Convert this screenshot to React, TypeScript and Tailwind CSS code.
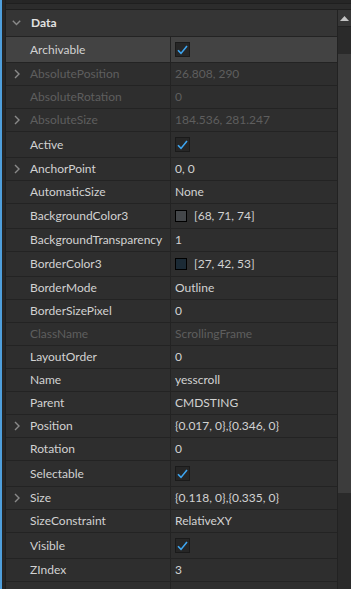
import type { ReactNode } from 'react';

type Prop = {
  name: string;
  value?: string;
  check?: boolean;
  color?: string;
  expand?: boolean;
  disabled?: boolean;
  selected?: boolean;
};

const props: Prop[] = [
  { name: 'Archivable', check: true, selected: true },
  { name: 'AbsolutePosition', value: '26.808, 290', expand: true, disabled: true },
  { name: 'AbsoluteRotation', value: '0', disabled: true },
  { name: 'AbsoluteSize', value: '184.536, 281.247', expand: true, disabled: true },
  { name: 'Active', check: true },
  { name: 'AnchorPoint', value: '0, 0', expand: true },
  { name: 'AutomaticSize', value: 'None' },
  { name: 'BackgroundColor3', value: '[68, 71, 74]', color: '#44474a' },
  { name: 'BackgroundTransparency', value: '1' },
  { name: 'BorderColor3', value: '[27, 42, 53]', color: '#1b2a35' },
  { name: 'BorderMode', value: 'Outline' },
  { name: 'BorderSizePixel', value: '0' },
  { name: 'ClassName', value: 'ScrollingFrame', disabled: true },
  { name: 'LayoutOrder', value: '0' },
  { name: 'Name', value: 'yesscroll' },
  { name: 'Parent', value: 'CMDSTING' },
  { name: 'Position', value: '{0.017, 0},{0.346, 0}', expand: true },
  { name: 'Rotation', value: '0' },
  { name: 'Selectable', check: true },
  { name: 'Size', value: '{0.118, 0},{0.335, 0}', expand: true },
  { name: 'SizeConstraint', value: 'RelativeXY' },
  { name: 'Visible', check: true },
  { name: 'ZIndex', value: '3' },
];

function Chevron() {
  return (
    <svg width="6" height="10" viewBox="0 0 6 10" className="absolute left-[8px]">
      <path d="M1 1 L5 5 L1 9" fill="none" stroke="#8a8a8a" strokeWidth="1.4" />
    </svg>
  );
}

function Checkbox() {
  return (
    <div className="flex h-[15px] w-[15px] items-center justify-center border border-[#1a1a1a] bg-[#262626]">
      <svg width="11" height="10" viewBox="0 0 11 10">
        <path d="M1 5.2 L4 8.4 L10 1" fill="none" stroke="#3ea6f2" strokeWidth="1.6" />
      </svg>
    </div>
  );
}

function Row({ p }: { p: Prop }) {
  const height = p.check ? 'h-[26px]' : p.color ? 'h-[25px]' : 'h-[23px]';
  const bg = p.selected ? 'bg-[#434343]' : 'bg-[#2e2e2e]';
  const text = p.disabled ? 'text-[#5e5e5e]' : 'text-[#d2d2d2]';

  let value: ReactNode = <span className={text}>{p.value}</span>;
  if (p.check) value = <Checkbox />;
  if (p.color)
    value = (
      <div className="flex items-center gap-[7px]">
        <div className="h-[12px] w-[12px] border border-black" style={{ backgroundColor: p.color }} />
        <span className={text}>{p.value}</span>
      </div>
    );

  return (
    <div className={`flex shrink-0 ${height} ${bg} border-b border-[#232323]`}>
      <div className={`relative flex w-[165px] items-center border-r border-[#232323] pl-[24px] ${text}`}>
        {p.expand && <Chevron />}
        {p.name}
      </div>
      <div className="flex flex-1 items-center pl-[4px]">{value}</div>
    </div>
  );
}

export default function App() {
  return (
    <div
      className="flex h-[589px] w-[351px] overflow-hidden bg-[#2b2b2b] text-[12px] leading-none"
      style={{ fontFamily: 'Lato, "Liberation Sans", sans-serif' }}
    >
      <div className="w-[2px] bg-[#4f9fdc]" />
      <div className="w-[3px] bg-[#252525]" />
      <div className="flex flex-1 flex-col border-l border-[#1e1e1e]">
        <div className="h-[4px] shrink-0 border-b border-[#1f1f1f] bg-[#262626]" />
        <div className="h-[6px] shrink-0 border-b border-[#1f1f1f] bg-[#2c2c2c]" />
        <div className="flex min-h-0 flex-1 overflow-hidden">
          <div className="flex flex-1 flex-col bg-[#2e2e2e]">
            <div className="flex h-[27px] shrink-0 items-center gap-[10px] border-b border-[#232323] bg-[#353535] pl-[6px] font-bold text-[#e2e2e2]">
              <svg width="9" height="6" viewBox="0 0 9 6">
                <path d="M0.8 0.8 L4.5 4.6 L8.2 0.8" fill="none" stroke="#8a8a8a" strokeWidth="1.4" />
              </svg>
              Data
            </div>
            {props.map((p) => (
              <Row key={p.name} p={p} />
            ))}
            <div className="flex h-[23px] shrink-0">
              <div className="w-[165px] border-r border-[#232323]" />
            </div>
          </div>
          <div className="flex w-[14px] shrink-0 flex-col border-l border-[#222222] bg-[#2a2a2a]">
            <div className="flex h-[16px] shrink-0 items-center justify-center bg-[#363636]">
              <svg width="9" height="5" viewBox="0 0 9 5">
                <path d="M4.5 0 L9 5 L0 5 Z" fill="#c4c4c4" />
              </svg>
            </div>
            <div className="h-[28px] shrink-0 border-t border-[#222222]" />
            <div className="h-[439px] shrink-0 bg-[#3c3c3c]" />
          </div>
        </div>
      </div>
    </div>
  );
}
